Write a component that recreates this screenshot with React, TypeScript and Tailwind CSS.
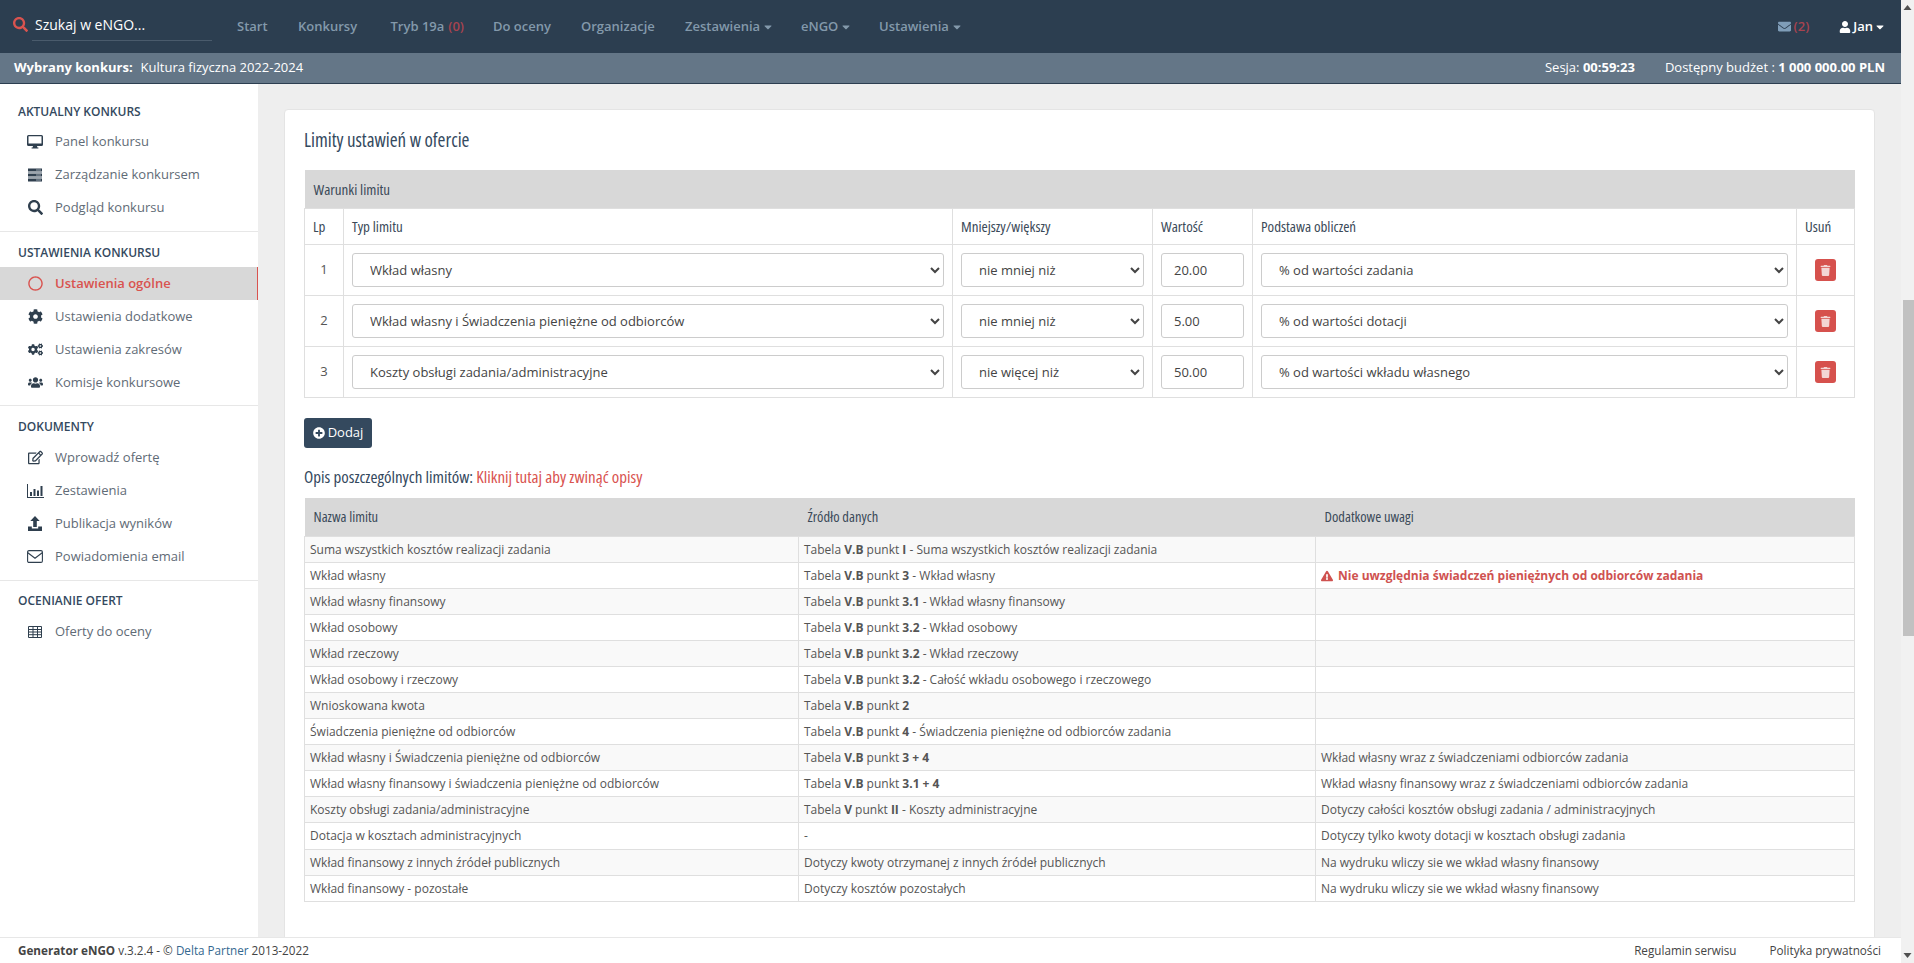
import type { ReactNode } from 'react';
import {
  FaCaretDown, FaCog, FaCogs, FaEnvelope, FaExclamationTriangle, FaPlusCircle,
  FaRegCircle, FaRegEdit, FaSearch, FaTrash, FaUser, FaUsers,
} from 'react-icons/fa';

const SANS = "font-['Open_Sans',sans-serif]";
const HEAD = "font-['Open_Sans',sans-serif] font-stretch-condensed";

const IconDesktop = () => (
  <svg viewBox="0 0 16 15" className="h-[15px] w-[16px] fill-current">
    <path fillRule="evenodd" d="M1.5 1h13A1.5 1.5 0 0 1 16 2.5v8a1.5 1.5 0 0 1-1.5 1.5h-13A1.5 1.5 0 0 1 0 10.5v-8A1.5 1.5 0 0 1 1.5 1zm0 1.2v7.3h13V2.2z" />
    <path d="M6 12h4l.4 1.6h1v1H4.600v-1h1z" />
  </svg>
);
const IconServer = () => (
  <svg viewBox="0 0 16 14" className="h-[14px] w-[16px] fill-current">
    <path d="M1 .5h14v3H1zM1 5.500h14v3H1zM1 10.500h14v3H1z" />
    <path className="fill-[#9aa5af]" d="M1 4h14v1H1zM1 9h14v1H1zM9 1.500h5v1H9zM9 6.500h5v1H9zM9 11.500h5v1H9z" />
  </svg>
);
const IconChart = () => (
  <svg viewBox="0 0 17 14" className="h-[14px] w-[17px] fill-current">
    <path d="M0 0h1v13h16v1H0zM3 8h2v4H3zM6.500 5h2v7h-2zM10 6.500h2V12h-2zM13.500 2h2v10h-2z" />
  </svg>
);
const IconUpload = () => (
  <svg viewBox="0 0 16 15" className="h-[15px] w-[16px] fill-current">
    <path d="M8 0l4.700 5H9.800v6H6.200V5H3.300zM1 10.500h3.800V12.500h6.400V10.500H15V15H1z" />
  </svg>
);
const IconEnvelope = () => (
  <svg viewBox="0 0 16 13" className="h-[13px] w-[16px] fill-none stroke-current" strokeWidth="1.100">
    <rect x=".6" y=".6" width="14.800" height="11.800" rx="1.400" />
    <path d="M.8 2.800 8 8.200l7.200-5.400" />
  </svg>
);
const IconTable = () => (
  <svg viewBox="0 0 14 12" className="h-[12px] w-[14px] fill-none stroke-current" strokeWidth="1">
    <path d="M.5.5h13v11H.5zM.5 3.500h13M.5 6h13M.5 8.700h13M5 .5v11M9.500.5v11" />
  </svg>
);

const sections = [
  {
    title: 'Aktualny konkurs',
    wrap: '',
    head: 'mb-[5px]',
    items: [
      { icon: <IconDesktop />, label: 'Panel konkursu' },
      { icon: <IconServer />, label: 'Zarządzanie konkursem' },
      { icon: <FaSearch />, label: 'Podgląd konkursu' },
    ],
  },
  {
    title: 'Ustawienia konkursu',
    wrap: 'mt-[7px] border-t border-[#e7e7e7] pt-[12px]',
    head: 'mb-[6px]',
    items: [
      { icon: <FaRegCircle />, label: 'Ustawienia ogólne', active: true },
      { icon: <FaCog />, label: 'Ustawienia dodatkowe' },
      { icon: <FaCogs />, label: 'Ustawienia zakresów' },
      { icon: <FaUsers />, label: 'Komisje konkursowe' },
    ],
  },
  {
    title: 'Dokumenty',
    wrap: 'mt-[6px] border-t border-[#e7e7e7] pt-[12px]',
    head: 'mb-[6px]',
    items: [
      { icon: <FaRegEdit />, label: 'Wprowadź ofertę' },
      { icon: <IconChart />, label: 'Zestawienia' },
      { icon: <IconUpload />, label: 'Publikacja wyników' },
      { icon: <IconEnvelope />, label: 'Powiadomienia email' },
    ],
  },
  {
    title: 'Ocenianie ofert',
    wrap: 'mt-[7px] border-t border-[#e7e7e7] pt-[11px]',
    head: 'mb-[6px]',
    items: [{ icon: <IconTable />, label: 'Oferty do oceny' }],
  },
];

const limits = [
  { type: 'Wkład własny', cmp: 'nie mniej niż', value: '20.00', base: '% od wartości zadania' },
  { type: 'Wkład własny i Świadczenia pieniężne od odbiorców', cmp: 'nie mniej niż', value: '5.00', base: '% od wartości dotacji' },
  { type: 'Koszty obsługi zadania/administracyjne', cmp: 'nie więcej niż', value: '50.00', base: '% od wartości wkładu własnego' },
];

function src(table: string, point: string, rest?: string): ReactNode {
  return (
    <>
      Tabela <b>{table}</b> punkt <b>{point}</b>{rest ? ` - ${rest}` : ''}
    </>
  );
}

const descriptions: { name: string; source: ReactNode; note?: ReactNode; tall?: boolean }[] = [
  { name: 'Suma wszystkich kosztów realizacji zadania', source: src('V.B', 'I', 'Suma wszystkich kosztów realizacji zadania') },
  {
    name: 'Wkład własny',
    source: src('V.B', '3', 'Wkład własny'),
    note: (
      <span className="flex items-center gap-[5px] font-bold text-[#cf5250]">
        <FaExclamationTriangle className="text-[12px]" /> Nie uwzględnia świadczeń pieniężnych od odbiorców zadania
      </span>
    ),
  },
  { name: 'Wkład własny finansowy', source: src('V.B', '3.1', 'Wkład własny finansowy') },
  { name: 'Wkład osobowy', source: src('V.B', '3.2', 'Wkład osobowy') },
  { name: 'Wkład rzeczowy', source: src('V.B', '3.2', 'Wkład rzeczowy') },
  { name: 'Wkład osobowy i rzeczowy', source: src('V.B', '3.2', 'Całość wkładu osobowego i rzeczowego') },
  { name: 'Wnioskowana kwota', source: src('V.B', '2') },
  { name: 'Świadczenia pieniężne od odbiorców', source: src('V.B', '4', 'Świadczenia pieniężne od odbiorców zadania') },
  { name: 'Wkład własny i Świadczenia pieniężne od odbiorców', source: src('V.B', '3 + 4'), note: 'Wkład własny wraz z świadczeniami odbiorców zadania' },
  { name: 'Wkład własny finansowy i świadczenia pieniężne od odbiorców', source: src('V.B', '3.1 + 4'), note: 'Wkład własny finansowy wraz z świadczeniami odbiorców zadania' },
  { name: 'Koszty obsługi zadania/administracyjne', source: src('V', 'II', 'Koszty administracyjne'), note: 'Dotyczy całości kosztów obsługi zadania / administracyjnych' },
  { name: 'Dotacja w kosztach administracyjnych', source: '-', note: 'Dotyczy tylko kwoty dotacji w kosztach obsługi zadania', tall: true },
  { name: 'Wkład finansowy z innych źródeł publicznych', source: 'Dotyczy kwoty otrzymanej z innych źródeł publicznych', note: 'Na wydruku wliczy sie we wkład własny finansowy' },
  { name: 'Wkład finansowy - pozostałe', source: 'Dotyczy kosztów pozostałych', note: 'Na wydruku wliczy sie we wkład własny finansowy' },
];

function NavItem({ label, caret, count, x }: { label: string; caret?: boolean; count?: string; x: string }) {
  return (
    <span className={`flex items-center whitespace-nowrap text-[13px] font-semibold text-[#8399ab] ${x}`}>
      {label}
      {count && <span className="ml-1 text-[#a8434f]">{count}</span>}
      {caret && <FaCaretDown className="ml-[2px] text-[12px]" />}
    </span>
  );
}

function Sidebar() {
  return (
    <aside className="w-[258px] shrink-0 bg-white pt-[19px]">
      {sections.map((s) => (
        <div key={s.title} className={s.wrap}>
          <div className={`${s.head} h-[17px] pl-[18px] text-[12px] leading-[17px] font-semibold text-[#34495e] uppercase`}>{s.title}</div>
          {s.items.map((it: { icon: ReactNode; label: string; active?: boolean }) => (
            <div
              key={it.label}
              className={`flex h-[33px] items-center text-[13px] ${it.active ? 'border-r border-[#d9534f] bg-[#d8d8d8] font-semibold text-[#d9534f]' : 'text-[#5f6b76]'}`}
            >
              <span className={`flex w-[55px] justify-center pl-[17px] pr-[2px] text-[15px] ${it.active ? '' : 'text-[#2f3f4e]'}`}>{it.icon}</span>
              {it.label}
            </div>
          ))}
        </div>
      ))}
    </aside>
  );
}

function LimitsTable() {
  const th = `border border-[#dfdfdf] px-[8px] text-left text-[15px] font-normal text-[#3b4a59] ${HEAD}`;
  const ctl = 'h-[34px] w-full rounded-[3px] border border-[#ccc] bg-white text-[13px] text-[#444]';
  return (
    <table className="w-[1550px] table-fixed border-collapse">
      <colgroup>
        <col className="w-[39px]" />
        <col className="w-[609px]" />
        <col className="w-[200px]" />
        <col className="w-[100px]" />
        <col className="w-[544px]" />
        <col className="w-[58px]" />
      </colgroup>
      <thead>
        <tr className="h-[38px] bg-[#d8d8d8]">
          <th colSpan={6} className={`px-[9px] text-left text-[15px] font-normal text-[#3b4a59] ${HEAD}`}>Warunki limitu</th>
        </tr>
        <tr className="h-[36px]">
          <th className={th}>Lp</th>
          <th className={th}>Typ limitu</th>
          <th className={th}>Mniejszy/większy</th>
          <th className={th}>Wartość</th>
          <th className={th}>Podstawa obliczeń</th>
          <th className={th}>Usuń</th>
        </tr>
      </thead>
      <tbody>
        {limits.map((l, i) => (
          <tr key={l.type} className="h-[51px]">
            <td className="border border-[#dfdfdf] text-center text-[13px] text-[#555]">{i + 1}</td>
            <td className="border border-[#dfdfdf] px-[8px]">
              <select className={`${ctl} pl-[13px]`} defaultValue={l.type}><option>{l.type}</option></select>
            </td>
            <td className="border border-[#dfdfdf] px-[8px]">
              <select className={`${ctl} pl-[13px]`} defaultValue={l.cmp}><option>{l.cmp}</option></select>
            </td>
            <td className="border border-[#dfdfdf] px-[8px]">
              <input className={`${ctl} px-[12px]`} defaultValue={l.value} />
            </td>
            <td className="border border-[#dfdfdf] px-[8px]">
              <select className={`${ctl} pl-[13px]`} defaultValue={l.base}><option>{l.base}</option></select>
            </td>
            <td className="border border-[#dfdfdf] text-center">
              <button className="inline-flex h-[22px] w-[21px] items-center justify-center rounded-[3px] bg-[#d6514d] text-[11px] text-[#f3d5d4]">
                <FaTrash />
              </button>
            </td>
          </tr>
        ))}
      </tbody>
    </table>
  );
}

function DescriptionsTable() {
  const th = `px-[9px] text-left text-[14.500px] font-normal text-[#3b4a59] ${HEAD}`;
  return (
    <table className="w-[1550px] table-fixed border-collapse text-[12px] text-[#555]">
      <colgroup>
        <col className="w-[494px]" />
        <col className="w-[517px]" />
        <col className="w-[539px]" />
      </colgroup>
      <thead>
        <tr className="h-[39px] bg-[#d8d8d8]">
          <th className={th}>Nazwa limitu</th>
          <th className={th}>Źródło danych</th>
          <th className={th}>Dodatkowe uwagi</th>
        </tr>
      </thead>
      <tbody>
        {descriptions.map((d, i) => (
          <tr key={d.name} className={`${d.tall ? 'h-[27px]' : 'h-[26px]'} ${i % 2 === 0 ? 'bg-[#f9f9f9]' : 'bg-white'}`}>
            <td className="border border-[#dfdfdf] px-[5px]">{d.name}</td>
            <td className="border border-[#dfdfdf] px-[5px]">{d.source}</td>
            <td className="border border-[#dfdfdf] px-[5px]">{d.note}</td>
          </tr>
        ))}
      </tbody>
    </table>
  );
}

export default function App() {
  return (
    <div className={`flex h-[963px] w-[1914px] overflow-hidden bg-[#eeeeee] ${SANS}`}>
      <div className="flex w-[1901px] flex-col">
        <header className="flex h-[53px] shrink-0 items-center bg-[#2c3e50] text-white">
          <div className="relative flex w-[237px] items-center pb-[4px] pl-[13px]">
            <FaSearch className="mr-[7px] text-[15px] text-[#d9534f]" />
            <span className="text-[14px]">Szukaj w eNGO...</span>
            <span className="absolute top-[26px] left-[32px] h-px w-[180px] bg-[#4a5b6c]" />
          </div>
          <NavItem label="Start" x="w-[61px]" />
          <NavItem label="Konkursy" x="w-[92.5px]" />
          <NavItem label="Tryb 19a" count="(0)" x="w-[102.5px]" />
          <NavItem label="Do oceny" x="w-[88px]" />
          <NavItem label="Organizacje" x="w-[104px]" />
          <NavItem label="Zestawienia" caret x="w-[116px]" />
          <NavItem label="eNGO" caret x="w-[78px]" />
          <NavItem label="Ustawienia" caret x="w-[100px]" />
          <div className="ml-auto flex items-center pr-[15px] text-[13px] font-semibold">
            <FaEnvelope className="mr-[3px] text-[13px] text-[#7f9db8]" />
            <span className="mr-[30px] text-[#a8434f]">(2)</span>
            <FaUser className="mr-[2px] text-[12px]" />
            <span>Jan</span>
            <FaCaretDown className="ml-[1px] text-[12px]" />
          </div>
        </header>
        <div className="flex h-[31px] shrink-0 items-center border-b border-[#2c3e50] bg-[#647687] pr-[16px] pl-[14px] text-[13px] text-white">
          <b className="mr-[8px]">Wybrany konkurs:</b>
          <span>Kultura fizyczna 2022-2024</span>
          <span className="ml-auto mr-[30px]">Sesja: <b>00:59:23</b></span>
          <span>Dostępny budżet : <b>1 000 000.00 PLN</b></span>
        </div>
        <div className="flex min-h-0 flex-1">
          <Sidebar />
          <main className="min-w-0 flex-1 overflow-hidden px-[26px] pt-[25px]">
            <div className="h-[900px] rounded-[4px] border border-[#e4e4e4] bg-white px-[19px] pt-[16px]">
              <h2 className={`mb-[16px] h-[28px] text-[19px] leading-[28px] font-normal text-[#34495e] ${HEAD}`}>Limity ustawień w ofercie</h2>
              <LimitsTable />
              <button className="mt-[20px] flex h-[30px] w-[68px] items-center justify-center gap-[3px] rounded-[3px] bg-[#34495e] text-[13px] text-white">
                <FaPlusCircle className="text-[12px]" /> Dodaj
              </button>
              <div className={`mt-[17px] mb-[9px] h-[24px] text-[17px] leading-[24px] text-[#34495e] ${HEAD}`}>
                Opis poszczególnych limitów: <span className="text-[#d9534f]">Kliknij tutaj aby zwinąć opisy</span>
              </div>
              <DescriptionsTable />
            </div>
          </main>
        </div>
        <footer className="flex h-[26px] shrink-0 items-center border-t border-[#e7e7e7] bg-white pr-[20px] pl-[18px] text-[11.7px] text-[#444]">
          <span><b>Generator eNGO</b> v.3.2.4 - © <span className="text-[#34688f]">Delta Partner</span> 2013-2022</span>
          <span className="ml-auto mr-[33px]">Regulamin serwisu</span>
          <span>Polityka prywatności</span>
        </footer>
      </div>
      <div className="flex w-[13px] flex-col bg-[#f1f1f1]">
        <svg viewBox="0 0 13 16" className="h-[16px] w-[13px] shrink-0 fill-[#505050]"><path d="M6.500 5 10.500 10H2.500z" /></svg>
        <div className="mt-[284px] ml-[2px] h-[336px] w-[11px] bg-[#c1c1c1]" />
        <svg viewBox="0 0 13 16" className="mt-auto h-[16px] w-[13px] shrink-0 fill-[#505050]"><path d="M6.500 11 10.500 6H2.500z" /></svg>
      </div>
    </div>
  );
}
